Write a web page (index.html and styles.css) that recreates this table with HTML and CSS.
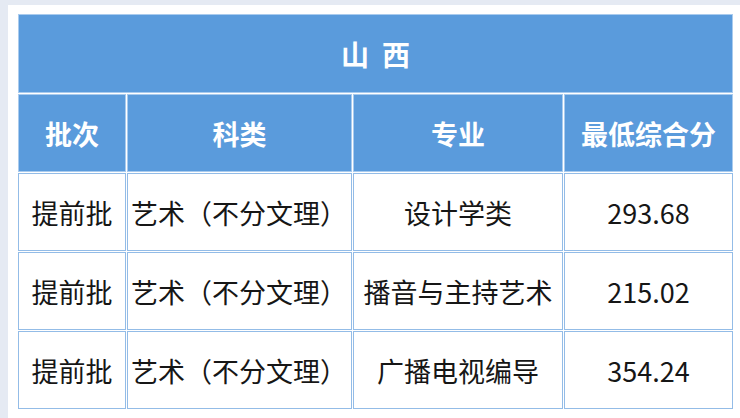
FILE: index.html
```html
<!DOCTYPE html>
<html lang="zh-CN">
<head>
<meta charset="utf-8">
<link rel="stylesheet" href="styles.css">
</head>
<body>
<div class="panel">
  <table class="score">
    <colgroup>
      <col class="c1"><col class="c2"><col class="c3"><col class="c4">
    </colgroup>
    <thead>
      <tr class="title-row"><th colspan="4" class="title">山西</th></tr>
      <tr class="head-row"><th>批次</th><th>科类</th><th>专业</th><th>最低综合分</th></tr>
    </thead>
    <tbody>
      <tr><td>提前批</td><td class="left">艺术（不分文理）</td><td>设计学类</td><td>293.68</td></tr>
      <tr><td>提前批</td><td class="left">艺术（不分文理）</td><td>播音与主持艺术</td><td>215.02</td></tr>
      <tr><td>提前批</td><td class="left">艺术（不分文理）</td><td>广播电视编导</td><td>354.24</td></tr>
    </tbody>
  </table>
</div>
</body>
</html>
```
FILE: styles.css
```css
html, body {
  margin: 0;
  padding: 0;
}
body {
  background: #e5eaf3;
  font-family: "Noto Sans CJK SC", "Noto Sans", sans-serif;
  width: 740px;
  height: 418px;
  overflow: hidden;
}
.panel {
  margin: 5px 0 0 8px;
  background: #ffffff;
  padding: 8px 6px 8px 9px;
  height: 413px;
  box-sizing: border-box;
}
.score {
  width: 717px;
  table-layout: fixed;
  border-collapse: separate;
  border-spacing: 1px;
  background: #ffffff;
}
.c1 { width: 108px; }
.c2 { width: 225px; }
.c3 { width: 210px; }
.c4 { width: 169px; }
.score th,
.score td {
  border: 1px solid #93bce7;
  padding: 0;
  text-align: center;
  vertical-align: middle;
  font-size: 27px;
  white-space: nowrap;
}
.score th {
  background: #5a9bdc;
  color: #ffffff;
  font-weight: 700;
  border-color: #a9cbee;
}
.score td {
  color: #161616;
  font-weight: 400;
}
.score td.left {
  text-align: left;
  padding-left: 3px;
}
.title-row { height: 79px; }
.head-row { height: 78px; }
.score tbody tr { height: 78px; }
.score th.title {
  font-size: 28px;
  letter-spacing: 13px;
  text-indent: 13px;
}
```
